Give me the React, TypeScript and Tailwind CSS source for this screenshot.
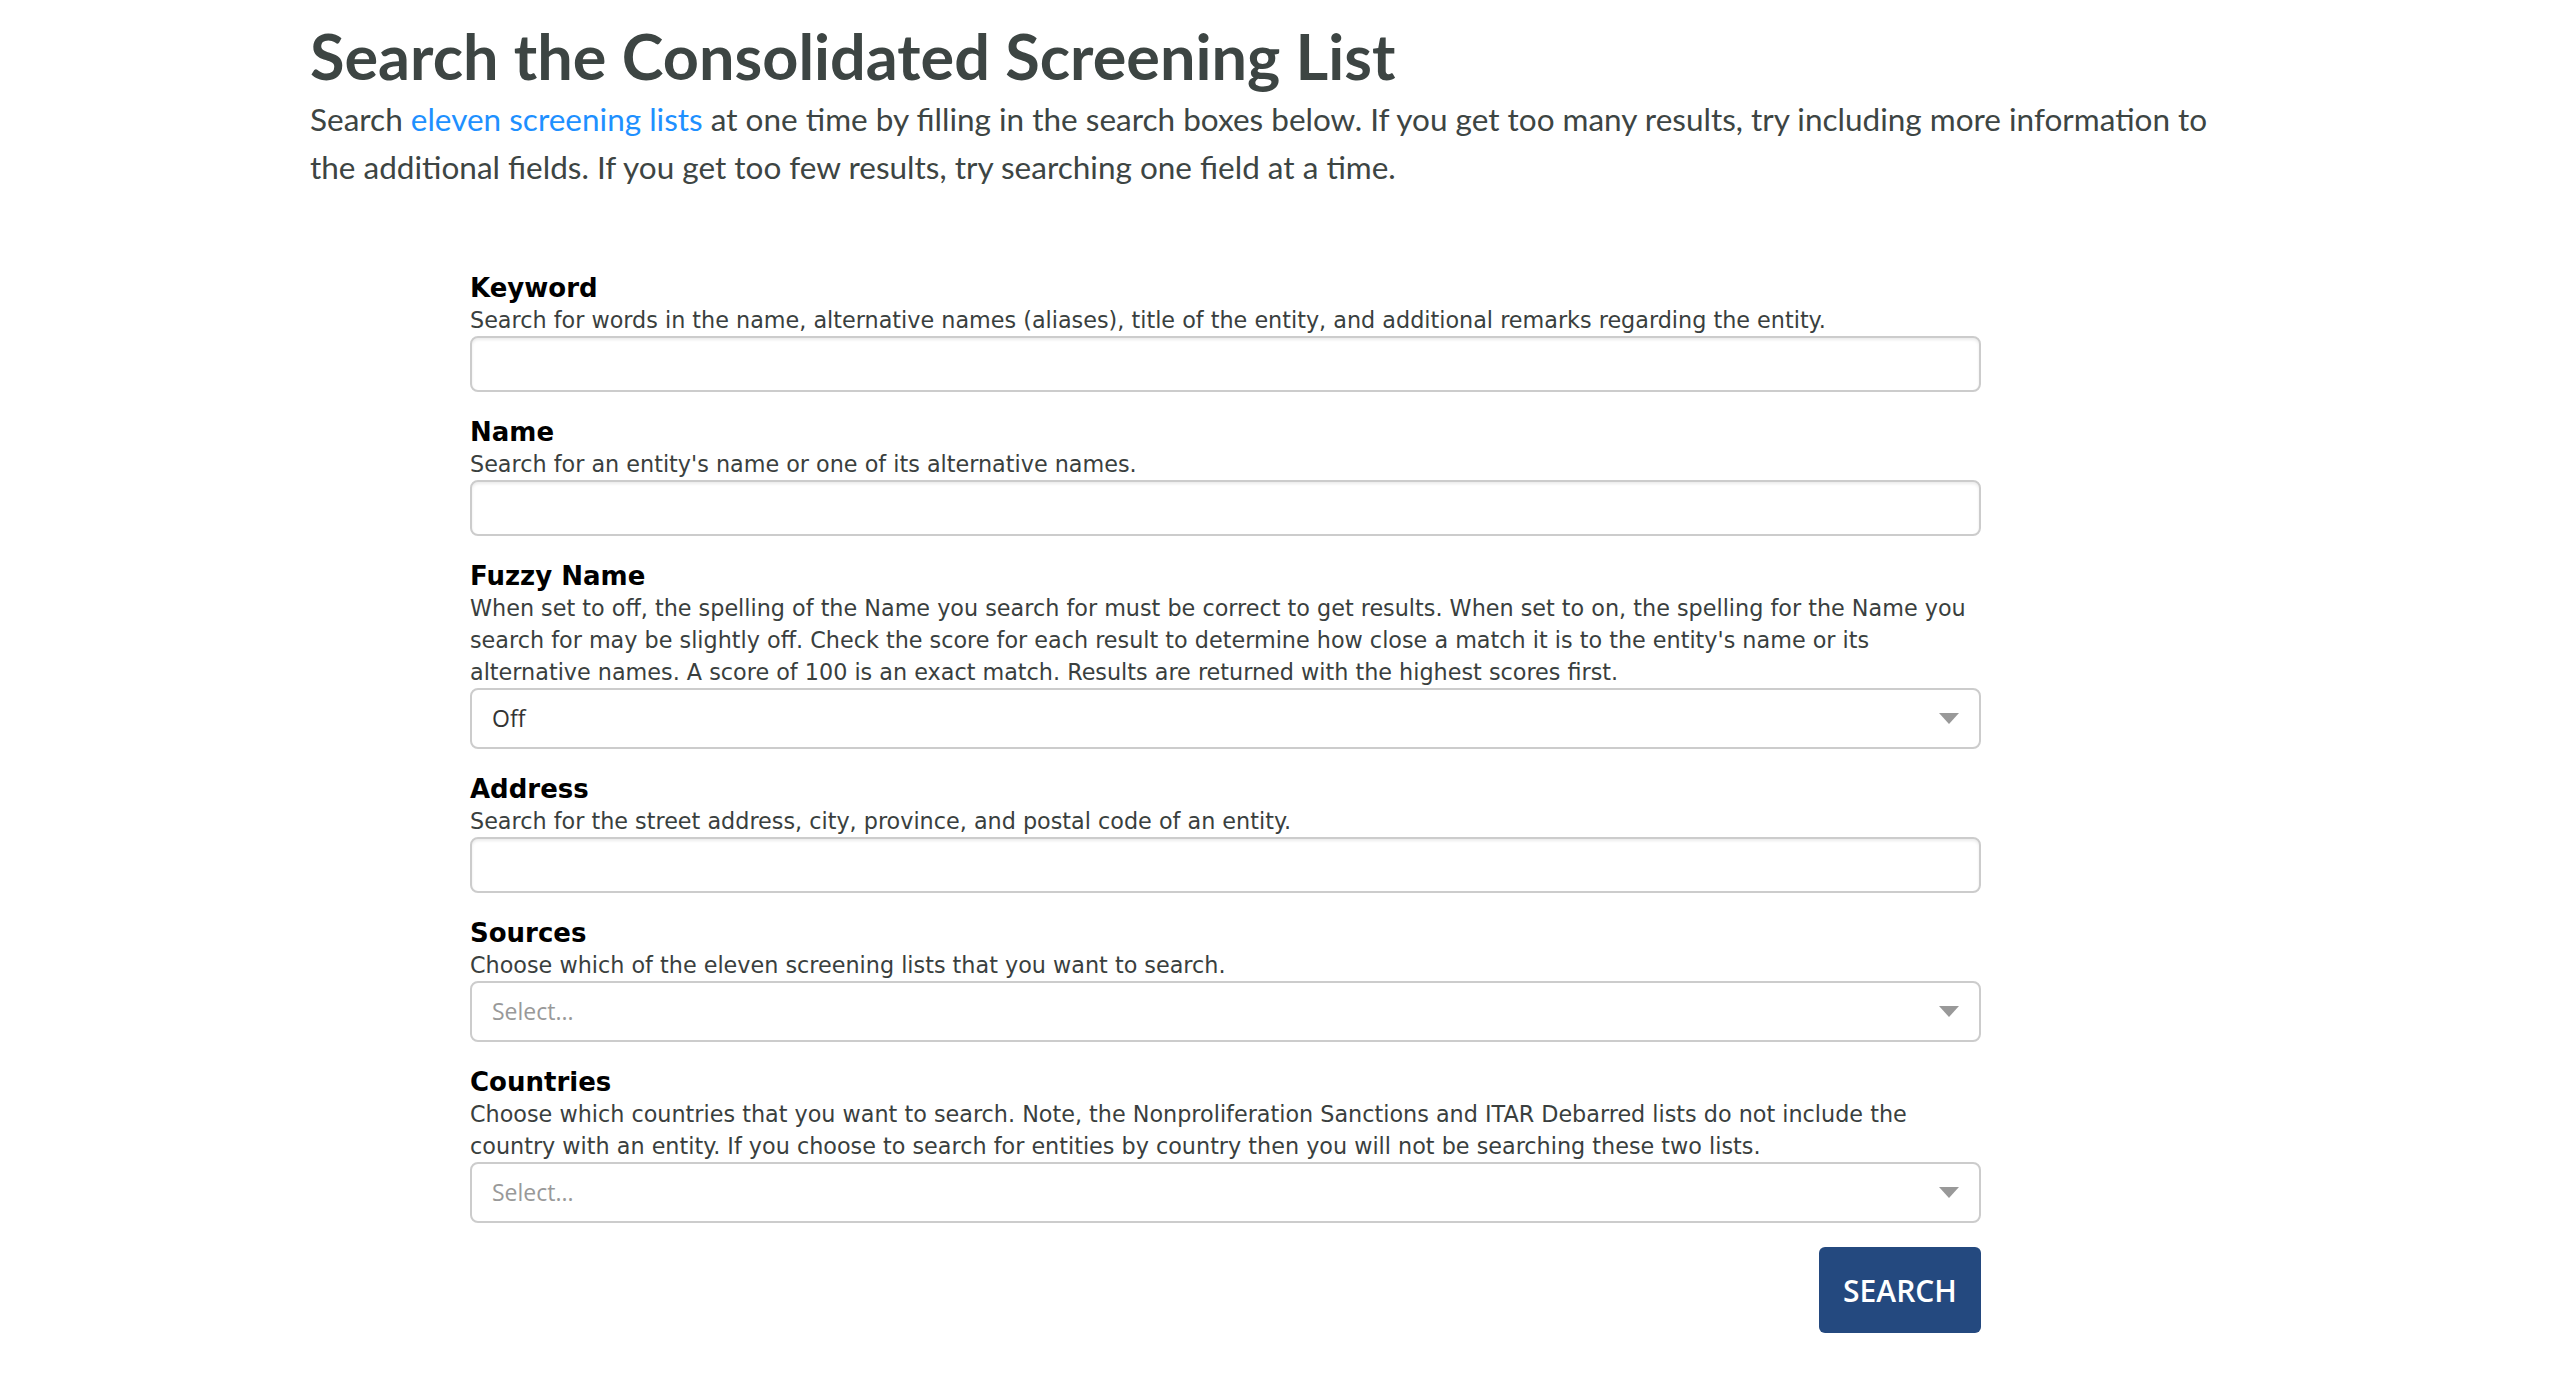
import { useState } from "react";

type Field = { id: string; label: string; help: string; kind: "text" | "select"; value?: string; placeholder?: string };

const fields: Field[] = [
  {
    id: "keyword",
    label: "Keyword",
    help: "Search for words in the name, alternative names (aliases), title of the entity, and additional remarks regarding the entity.",
    kind: "text",
  },
  {
    id: "name",
    label: "Name",
    help: "Search for an entity's name or one of its alternative names.",
    kind: "text",
  },
  {
    id: "fuzzy",
    label: "Fuzzy Name",
    help: "When set to off, the spelling of the Name you search for must be correct to get results. When set to on, the spelling for the Name you search for may be slightly off. Check the score for each result to determine how close a match it is to the entity's name or its alternative names. A score of 100 is an exact match. Results are returned with the highest scores first.",
    kind: "select",
    value: "Off",
  },
  {
    id: "address",
    label: "Address",
    help: "Search for the street address, city, province, and postal code of an entity.",
    kind: "text",
  },
  {
    id: "sources",
    label: "Sources",
    help: "Choose which of the eleven screening lists that you want to search.",
    kind: "select",
    placeholder: "Select...",
  },
  {
    id: "countries",
    label: "Countries",
    help: "Choose which countries that you want to search. Note, the Nonproliferation Sanctions and ITAR Debarred lists do not include the country with an entity. If you choose to search for entities by country then you will not be searching these two lists.",
    kind: "select",
    placeholder: "Select...",
  },
];

function Arrow() {
  return (
    <svg width="20" height="11" viewBox="0 0 20 11" className="shrink-0">
      <polygon points="0,0 20,0 10,11" fill="#999999" />
    </svg>
  );
}

export default function App() {
  const [vals, setVals] = useState<Record<string, string>>({});

  return (
    <div className="min-h-screen bg-white">
      <div className="mx-auto w-[1940px] pt-[16px] pb-10">
        <h1 className="font-['Lato',sans-serif] text-[63px] font-bold leading-[80px] text-[#3d4543]">
          Search the Consolidated Screening List
        </h1>
        <p className="mt-[-1px] font-['Lato',sans-serif] text-[31.5px] leading-[48px] text-[#3d4543]">
          Search <a href="#" className="text-[#1e90ff]">eleven screening lists</a> at one time by filling in the search boxes below. If you get too many results, try including more information to the additional fields. If you get too few results, try searching one field at a time.
        </p>

        <form className="ml-[160px] mt-[81px] w-[1511px] font-['DejaVu_Sans','Verdana',sans-serif]" onSubmit={(e) => e.preventDefault()}>
          {fields.map((f) => (
            <div key={f.id} className="mb-[24px]">
              <label htmlFor={f.id} className="block text-[26px] font-bold leading-[32px] text-black">{f.label}</label>
              <p className="text-[22.3px] leading-[32px] text-[#3a3f3e]">{f.help}</p>
              {f.kind === "text" ? (
                <input
                  id={f.id}
                  value={vals[f.id] ?? ""}
                  onChange={(e) => setVals({ ...vals, [f.id]: e.target.value })}
                  className="block h-[56px] w-full rounded-[8px] border-2 border-[#cccccc] bg-white px-4 text-[21px] shadow-[inset_0_2px_3px_rgba(0,0,0,0.08)] outline-none"
                />
              ) : (
                <div className="flex h-[61px] w-full items-center justify-between rounded-[8px] border-2 border-[#cccccc] bg-white pl-[20px] pr-[20px]">
                  <span className={f.value ? "font-['Open_Sans',sans-serif] text-[23px] text-[#333]" : "font-['Open_Sans',sans-serif] text-[23px] text-[#999]"}>
                    {f.value ?? f.placeholder}
                  </span>
                  <Arrow />
                </div>
              )}
            </div>
          ))}
          <div className="flex justify-end">
            <button type="submit" className="h-[86px] w-[162px] rounded-[6px] bg-[#24497f] font-['Open_Sans',sans-serif] text-[30px] font-semibold text-white">
              SEARCH
            </button>
          </div>
        </form>
      </div>
    </div>
  );
}
